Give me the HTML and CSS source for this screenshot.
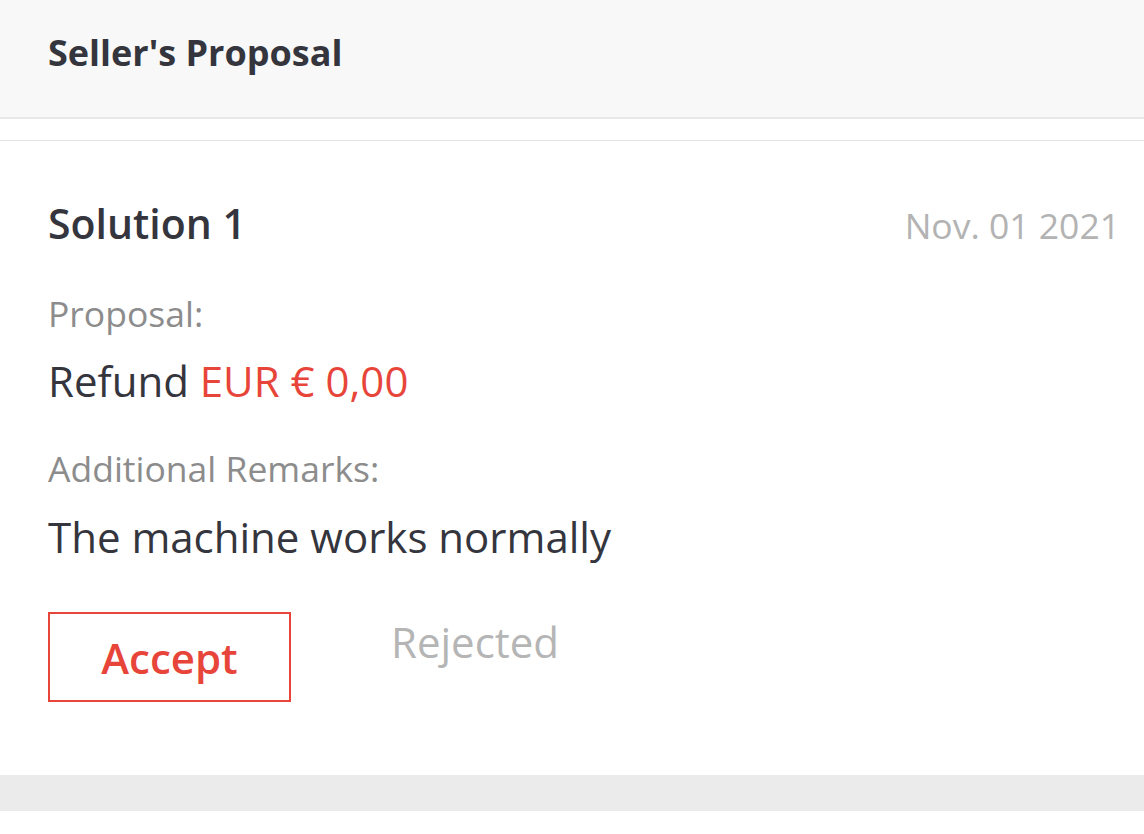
FILE: index.html
```html
<!DOCTYPE html>
<html>
<head>
<meta charset="utf-8">
<link rel="stylesheet" href="styles.css">
</head>
<body>
<header class="topbar">
  <h1 class="topbar-title">Seller's Proposal</h1>
</header>
<div class="spacer"></div>
<section class="card">
  <div class="card-head">
    <h2 class="solution-title">Solution 1</h2>
    <span class="solution-date">Nov. 01 2021</span>
  </div>
  <div class="field field-first">
    <div class="field-label">Proposal:</div>
    <div class="field-value refund">Refund <span class="amount">EUR € 0,00</span></div>
  </div>
  <div class="field">
    <div class="field-label">Additional Remarks:</div>
    <div class="field-value remarks">The machine works normally</div>
  </div>
  <div class="actions">
    <button class="btn-accept">Accept</button>
    <span class="rejected">Rejected</span>
  </div>
</section>
<div class="band"></div>
</body>
</html>
```
FILE: styles.css
```css
html, body {
  margin: 0;
  padding: 0;
  background: #ffffff;
  font-family: "Open Sans", "Noto Sans", sans-serif;
  color: #33343b;
}
.topbar {
  height: 119px;
  background: #f8f8f8;
  border-bottom: 2px solid #e8e8e8;
  box-sizing: border-box;
  display: flex;
  align-items: center;
  padding: 0 48px;
}
.topbar-title {
  margin: 0;
  font-size: 36px;
  font-weight: 700;
  color: #34353d;
  padding-bottom: 12px;
}
.spacer {
  height: 21px;
  border-bottom: 1px solid #e4e4e4;
}
.card {
  padding: 0 24px 0 48px;
  display: flex;
  flex-direction: column;
}
.card-head {
  display: flex;
  justify-content: space-between;
  align-items: baseline;
  padding-top: 54px;
}
.solution-title {
  margin: 0;
  font-size: 41px;
  font-weight: 600;
  line-height: 56px;
  color: #34353d;
}
.solution-date {
  font-size: 35.5px;
  color: #b3b3b3;
}
.field {
  display: flex;
  flex-direction: column;
}
.field-label {
  font-size: 35.5px;
  color: #8c8c8c;
  margin-top: 35px;
  line-height: 48px;
}
.field-first .field-label {
  margin-top: 38px;
}
.field-value {
  font-size: 42px;
  line-height: 56px;
  color: #34353d;
  margin-top: 16px;
}
.remarks {
  margin-top: 17px;
}
.amount {
  color: #e8453a;
}
.actions {
  display: flex;
  align-items: flex-start;
  gap: 100px;
  margin-top: 47px;
}
.btn-accept {
  width: 243px;
  height: 90px;
  border: 2px solid #e8453a;
  background: #ffffff;
  color: #e8453a;
  font-family: "Open Sans", "Noto Sans", sans-serif;
  font-size: 42px;
  font-weight: 600;
  padding: 0;
  box-sizing: border-box;
}
.rejected {
  font-size: 42px;
  color: #b5b5b5;
  line-height: 60px;
}
.band {
  height: 36px;
  background: #ebebeb;
  margin-top: 73px;
}
```
